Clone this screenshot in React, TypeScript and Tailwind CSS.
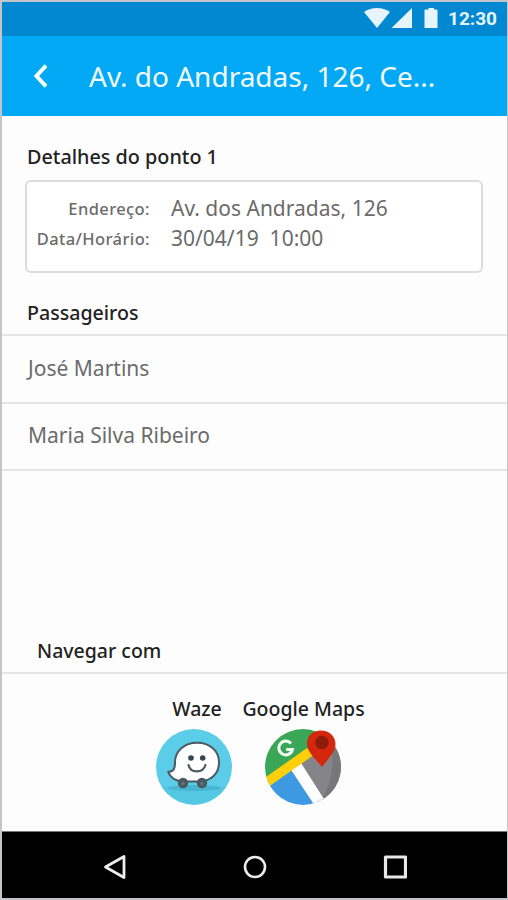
interface Passenger {
    id: number;
    name: string;
}

const passengers: Passenger[] = [
    { id: 1, name: 'José Martins' },
    { id: 2, name: 'Maria Silva Ribeiro' },
];

function StatusBar() {
    return (
        <div className="flex h-[34px] items-center justify-end bg-[#0288d1] pr-[10px] text-[#e6f4fd]">
            <svg width="90" height="34" viewBox="0 0 90 34" fill="currentColor" className="mr-[-6px]">
                <path d="M0 10C7.5 4.8 18.5 4.8 26 10L13 26Z" />
                <path d="M27.5 26L48 6V26Z" />
                <path d="M60.5 8.5Q60.5 7.5 61.5 7.5H64.5V6H70V7.5H72.5Q73.5 7.5 73.5 8.5V26H60.5Z" />
            </svg>
            <span className="font-['Roboto',sans-serif] text-[19px] leading-[34px] font-bold">12:30</span>
        </div>
    );
}

function Header() {
    return (
        <header className="flex h-20 items-center bg-[#03a9f4] pl-[31px] text-white">
            <button aria-label="Voltar">
                <svg width="14" height="24" viewBox="0 0 14 24" fill="none" stroke="currentColor" strokeWidth="4">
                    <path d="M13 1.5L3.5 12L13 22.5" />
                </svg>
            </button>
            <h1 className="ml-[42px] text-[28px] leading-9 whitespace-nowrap text-[#f2faff]">Av. do Andradas, 126, Ce...</h1>
        </header>
    );
}

function WazeIcon() {
    return (
        <svg width="76" height="76" viewBox="0 0 76 76">
            <circle cx="38" cy="38" r="38" fill="#5bcde8" />
            <path d="M6 58H70Q58 73 38 75Q18 73 6 58Z" fill="#54c7e3" />
            <ellipse cx="38" cy="59" rx="27" ry="3" fill="#48b6d2" />
            <path
                d="M41 13.8C54 13.8 63 22 63 33.5C63 45 54.5 52.5 43 52.5H29C20 52.5 14 48.5 12.3 42.7C17 43 19 40.5 19 33.5C19 22 28.5 13.8 41 13.8Z"
                fill="#fff"
                stroke="#4b5960"
                strokeWidth="2"
                strokeLinejoin="round"
            />
            <circle cx="27" cy="54" r="5.2" fill="#4b5960" />
            <circle cx="46" cy="54" r="5.2" fill="#4b5960" />
            <circle cx="27" cy="54.5" r="1.8" fill="#65747b" />
            <circle cx="46" cy="54.5" r="1.8" fill="#65747b" />
            <circle cx="35" cy="29" r="2.8" fill="#34454d" />
            <circle cx="46.7" cy="29" r="2.8" fill="#34454d" />
            <path d="M32.5 36C34.5 44.5 47 44.5 49.5 36" fill="none" stroke="#4b5960" strokeWidth="2.2" strokeLinecap="round" />
        </svg>
    );
}

function GoogleMapsIcon() {
    return (
        <svg width="78" height="78" viewBox="0 0 78 78">
            <clipPath id="maps-disc">
                <circle cx="39" cy="39" r="38" />
            </clipPath>
            <g clipPath="url(#maps-disc)">
                <path d="M0 0H78V12L0 58Z" fill="#3aa757" />
                <path d="M29 40L47 26L78 12V78H56Z" fill="#858489" />
                <path d="M67 18Q73 48 56 74L78 78V18Z" fill="#77767b" />
                <path d="M4 55L29 40L53 78H0Z" fill="#3c99e2" />
                <path d="M26.5 41L37 35L62.5 75L53 81Z" fill="#fff" />
                <path d="M49.5 75L57 70.5L61 77L53 81Z" fill="#e2e5ed" />
                <path d="M0 50.5L43 20L49 27.5L5 58.5Z" fill="#ffcf09" />
            </g>
            {/* G of the map badge */}
            <path d="M27 15.5A6.9 6.9 0 1 0 28.5 21.5H22.2" fill="none" stroke="#f4fff6" strokeWidth="3" />
            <path d="M58 39C52 31.5 43 24 43 15.5C43 7.5 49 2.5 57 2.5C65.5 2.5 71.5 8.5 71.5 16C71.5 24 64 31 58 39Z" fill="#d4270e" />
            <circle cx="58" cy="14.5" r="6.8" fill="#8f1b0b" />
        </svg>
    );
}

function NavigationBar() {
    return (
        <nav className="flex h-[67px] items-center justify-center gap-[116px] border-t border-[#777] bg-black pt-[3px] pl-px">
            <svg width="24" height="26" viewBox="0 0 24 26" fill="none" stroke="#eee" strokeWidth="2.8" strokeLinejoin="round">
                <path d="M21 2.5V23.5L2.5 13Z" />
            </svg>
            <svg width="24" height="24" viewBox="0 0 24 24" fill="none" stroke="#eee" strokeWidth="2.6">
                <circle cx="12" cy="12" r="10" />
            </svg>
            <svg width="24" height="24" viewBox="0 0 24 24" fill="none" stroke="#e8e8e8" strokeWidth="3.2" strokeLinejoin="round">
                <rect x="2.5" y="2" width="20" height="20" />
            </svg>
        </nav>
    );
}

export default function App() {
    return (
        <div className="flex h-[900px] w-[508px] flex-col border-t-2 border-r border-b-2 border-l-2 border-[#c5c5c9] bg-[#fdfdfd] font-['Noto_Sans',sans-serif] text-[#222]">
            <StatusBar />
            <Header />

            <main className="flex flex-1 flex-col">
                <h2 className="mt-[27px] ml-[25px] text-[19.8px] leading-7 font-medium">Detalhes do ponto 1</h2>
                <section className="mt-[9px] ml-[23px] h-[93px] w-[458px] rounded-md border-2 border-[#dcdcdc] bg-white pt-3 text-[#6b6b6b]">
                    <div className="flex h-[30px] items-center">
                        <span className="w-[123px] text-right text-[16.5px] font-medium tracking-[0.4px]">Endereço:</span>
                        <span className="ml-[21px] text-[21px]">Av. dos Andradas, 126</span>
                    </div>
                    <div className="flex h-[30px] items-center">
                        <span className="w-[123px] text-right text-[16.5px] font-medium tracking-[0.4px]">Data/Horário:</span>
                        <span className="ml-[21px] text-[21px] whitespace-pre">30/04/19  10:00</span>
                    </div>
                </section>

                <h2 className="mt-[26px] ml-[25px] text-[19.6px] leading-7 font-medium">Passageiros</h2>
                <ul className="mt-[7px] border-t-2 border-[#e5e5e5]">
                    {passengers.map(p => (
                        <li key={p.id} className="flex h-[67.5px] items-center border-b-2 border-[#e5e5e5] pb-px pl-[26px] text-[21px] text-[#6b6b6b]">
                            {p.name}
                        </li>
                    ))}
                </ul>

                <section className="mt-auto h-[194px]">
                    <h2 className="h-[37px] border-b-2 border-[#e5e5e5] pl-[35px] text-[19.5px] leading-7 font-medium">Navegar com</h2>
                    <div className="flex pt-[21px] pl-[154px]">
                        <div className="flex w-[76px] flex-col items-center">
                            <span className="pl-[6px] text-[19.5px] leading-7 font-medium">Waze</span>
                            <div className="mt-[6px]">
                                <WazeIcon />
                            </div>
                        </div>
                        <div className="ml-[9px] flex w-[124px] flex-col items-center">
                            <span className="pl-px text-[19.5px] leading-7 font-medium whitespace-nowrap">Google Maps</span>
                            <div className="mt-[5px] mr-px">
                                <GoogleMapsIcon />
                            </div>
                        </div>
                    </div>
                </section>
            </main>

            <NavigationBar />
        </div>
    );
}
